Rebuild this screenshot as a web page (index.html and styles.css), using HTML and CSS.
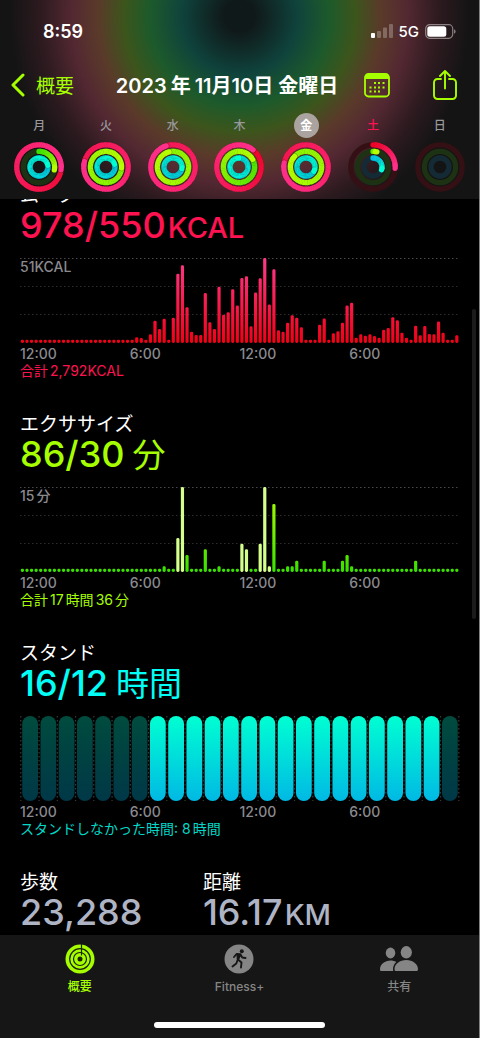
FILE: index.html
```
<!DOCTYPE html>
<html lang="ja">
<head>
  <meta charset="UTF-8">
  <meta name="viewport" content="width=device-width, initial-scale=1.0">
  <title>フィットネス</title>
  <link rel="stylesheet" href="styles.css">
</head>
<body>

<header class="top">
  <div class="status">
    <span class="time">8:59</span>
    <div class="status-icons">
      <svg width="22" height="14" viewBox="0 0 22 14" fill="#fff">
        <rect x="0" y="9" width="4" height="5" rx="1"/>
        <g opacity=".25">
          <rect x="6" y="7" width="4" height="7" rx="1"/>
          <rect x="12" y="3.500" width="4" height="10.500" rx="1"/>
          <rect x="18" y="0" width="4" height="14" rx="1"/>
        </g>
      </svg>
      <span class="network">5G</span>
      <svg width="31" height="15" viewBox="0 0 31 15">
        <rect x=".7" y=".7" width="27" height="13.600" rx="4" fill="none" stroke="#fff" stroke-opacity=".45" stroke-width="1.200"/>
        <rect x="2.300" y="2.300" width="19" height="10.400" rx="2.500" fill="#fff"/>
        <path d="M29 5.300c1 .5 1.600 1.200 1.600 2.200s-.6 1.700-1.600 2.200z" fill="#fff" opacity=".45"/>
      </svg>
    </div>
  </div>

  <div class="titlebar">
    <button class="back">
      <svg width="14" height="24" viewBox="0 0 14 24" fill="none" stroke="currentColor" stroke-width="3" stroke-linecap="round" stroke-linejoin="round"><path d="M12 2 2 12l10 10"/></svg>
      <span>概要</span>
    </button>
    <h1>2023<span class="kanji">年</span>11月10日 金曜日</h1>
    <button class="icon-button" aria-label="カレンダー">
      <svg width="26" height="25" viewBox="0 0 26 25">
        <rect x="1" y="1" width="24" height="22.500" rx="3.500" fill="none" stroke="currentColor" stroke-width="1.800"/>
        <path d="M1 6V4a3 3 0 0 1 3-3h18a3 3 0 0 1 3 3v2z" fill="currentColor"/>
        <g fill="currentColor">
          <path d="M10 9h2v2h-2zM14 9h2v2h-2zM18.500 9h2v2h-2z"/>
          <path d="M5.500 13.500h2v2h-2zM10 13.500h2v2h-2zM14 13.500h2v2h-2zM18.500 13.500h2v2h-2z"/>
          <path d="M5.500 17.500h2v2h-2zM10 17.500h2v2h-2zM14 17.500h2v2h-2z"/>
        </g>
      </svg>
    </button>
    <button class="icon-button share" aria-label="共有">
      <svg width="24" height="30" viewBox="0 0 24 30" fill="none" stroke="currentColor" stroke-width="1.900" stroke-linecap="round" stroke-linejoin="round">
        <path d="M8 9H4.500A3.500 3.500 0 0 0 1 12.500v13A3.500 3.500 0 0 0 4.500 29h15a3.500 3.500 0 0 0 3.500-3.500v-13A3.500 3.500 0 0 0 19.500 9H16"/>
        <path d="M12 18.500V1.500M7 6l5-5 5 5"/>
      </svg>
    </button>
  </div>

  <div class="week" id="week"></div>
</header>

<main>
  <section class="move">
    <h2>ムーブ</h2>
    <p class="value">978/550<span class="unit">KCAL</span></p>
    <div class="chart">
      <svg id="moveChart" viewBox="0 0 439 85" preserveAspectRatio="none"></svg>
      <span class="max">51KCAL</span>
    </div>
    <div class="hours"><span>12:00</span><span>6:00</span><span>12:00</span><span>6:00</span></div>
    <p class="total">合計<span class="num">2,792KCAL</span></p>
  </section>

  <section class="exercise">
    <h2>エクササイズ</h2>
    <p class="value">86/30<span class="kanji">分</span></p>
    <div class="chart">
      <svg id="exerciseChart" viewBox="0 0 439 85" preserveAspectRatio="none"></svg>
      <span class="max">15<span class="num">分</span></span>
    </div>
    <div class="hours"><span>12:00</span><span>6:00</span><span>12:00</span><span>6:00</span></div>
    <p class="total">合計<span class="num">17</span><span class="num">時間</span><span class="num">36</span><span class="num">分</span></p>
  </section>

  <section class="stand">
    <h2>スタンド</h2>
    <p class="value">16/12<span class="kanji">時間</span></p>
    <div class="chart">
      <svg id="standChart" viewBox="0 0 439 85" preserveAspectRatio="none"></svg>
    </div>
    <div class="hours"><span>12:00</span><span>6:00</span><span>12:00</span><span>6:00</span></div>
    <p class="total">スタンドしなかった時間: 8<span class="num">時間</span></p>
  </section>

  <div class="totals">
    <div>
      <h2>歩数</h2>
      <p class="value">23,288</p>
    </div>
    <div>
      <h2>距離</h2>
      <p class="value">16.17<span class="unit">KM</span></p>
    </div>
  </div>

  <div class="scroll-thumb"></div>
</main>

<footer>
  <nav>
    <a href="#" class="active">
      <svg width="30" height="30" viewBox="0 0 30 30" fill="none">
        <circle cx="15" cy="15" r="14.500" fill="currentColor"/>
        <g stroke="#1c2404" stroke-width="1.200">
          <circle cx="15" cy="15" r="10.300"/>
          <circle cx="15" cy="15" r="6.500"/>
          <path d="M16.500 0v11.500"/>
        </g>
        <circle cx="15" cy="15" r="2.500" fill="#1c2404"/>
      </svg>
      概要
    </a>
    <a href="#">
      <svg width="30" height="30" viewBox="0 0 30 30">
        <circle cx="15" cy="15" r="14.500" fill="currentColor"/>
        <circle cx="17.800" cy="7.300" r="2" fill="#161616"/>
        <path d="M10 13l2.500-3 4 .3-2.500 5.200 3.500 3-.5 5M13.800 15.500l-1.500 4-3.800 3M16.500 10.500l1.800 3 3.200.5" fill="none" stroke="#161616" stroke-width="1.900" stroke-linecap="round" stroke-linejoin="round"/>
        <path d="M12.500 10.500l4-.3-1.800 6-2-1z" fill="#161616"/>
      </svg>
      Fitness+
    </a>
    <a href="#">
      <svg width="38" height="30" viewBox="0 0 38 30" fill="currentColor">
        <ellipse cx="10.500" cy="9" rx="4.800" ry="5.400"/>
        <path d="M0 25.500C0 20 5 16.500 10.500 16.500c2.200 0 4.200.5 5.800 1.500-2.300 2-3.300 4.500-3.300 7.500 0 .6.100 1 .4 1.500H1.500C.5 27 0 26.500 0 25.500z"/>
        <ellipse cx="26.300" cy="8.300" rx="5.600" ry="6.200"/>
        <path d="M14.500 25.200c0-5.200 5.300-9.200 11.800-9.200S38 20 38 25.200c0 1.200-.6 1.800-1.700 1.800H16.200c-1.100 0-1.700-.6-1.700-1.800z"/>
      </svg>
      共有
    </a>
  </nav>
  <div class="home-bar"></div>
</footer>

<script src="script.js"></script>
</body>
</html>
```

FILE: styles.css
```
:root {
  --bar-bg: #141414;
  --move: #ff1250;
  --exercise: #a6ff00;
  --stand: #00fff6;
  --grey: #8a8a8f;
  --tint: #a6ff00;
}
* {
  box-sizing: border-box;
}
body {
  margin: 0;
  height: 100vh;
  display: flex;
  flex-direction: column;
  background: #000;
  color: #fff;
  border-right: 1px solid #808080;
  font-family: Inter, "Noto Sans CJK JP", sans-serif;
}
h1, h2, p {
  margin: 0;
}
button {
  padding: 0;
  border: none;
  background: none;
  color: var(--tint);
  font: inherit;
  cursor: pointer;
}
svg {
  display: block;
}

/* header */
.top {
  position: relative;
  z-index: 1;
  flex: none;
  height: 199px;
  background: radial-gradient(circle at 50% 16px, #10191a 16px, #0f433c 58px, #1d5a2b 90px, #3c551c 116px, #5a3a2a 142px, #532832 168px, #2c1a1f 200px, var(--bar-bg) 230px);
}
.status {
  display: flex;
  justify-content: space-between;
  align-items: center;
  height: 62px;
  padding: 0 23px 0 43px;
}
.time {
  font-size: 18px;
  font-weight: 600;
}
.status-icons {
  display: flex;
  align-items: center;
  gap: 6px;
}
.network {
  font-size: 15px;
  font-weight: 500;
}
.titlebar {
  display: flex;
  align-items: center;
  height: 46px;
  padding: 0 22px 0 11px;
}
.back {
  display: flex;
  align-items: center;
  gap: 11px;
  font-size: 19px;
}
.back span, h1 {
  padding-bottom: 2px;
}
h1 {
  flex: 1;
  margin-left: 16px;
  text-align: center;
  white-space: nowrap;
  font-size: 20px;
  font-weight: 600;
}
h1 .kanji {
  margin: 0 4px;
}
.share {
  margin-left: 43px;
}
.week {
  display: grid;
  grid-template-columns: repeat(7, 1fr);
  padding: 5px 6px 0;
}
.day {
  display: flex;
  flex-direction: column;
  align-items: center;
  gap: 4px;
  color: #98989d;
  font-size: 12px;
  font-weight: 500;
}
.day span {
  width: 25px;
  height: 25px;
  line-height: 25px;
  border-radius: 50%;
  text-align: center;
}
.day.selected span {
  background: #aaa39f;
  color: #fff;
  font-weight: 700;
}
.day.today span {
  color: var(--move);
}

/* charts */
main {
  position: relative;
  flex: 1;
  min-height: 0;
  overflow: hidden;
  padding: 0 20px;
}
section {
  padding-bottom: 34px;
}
/* first title is half scrolled under the header */
.move {
  margin-top: -16px;
}
h2 {
  height: 24px;
  font-size: 19px;
  line-height: 26px;
  font-weight: 400;
}
.value {
  height: 38px;
  font-size: 36px;
  line-height: 36px;
  font-weight: 500;
  white-space: nowrap;
}
.value .unit {
  margin-left: 2px;
  font-size: 29px;
  line-height: 1;
}
.value .kanji {
  margin-left: 8px;
  font-size: 33px;
  line-height: 1;
  font-weight: 400;
}
.move .value, .move .total {
  color: var(--move);
}
.exercise .value, .exercise .total {
  color: var(--exercise);
}
.stand .value {
  color: var(--stand);
}
.stand .total {
  color: #00d8c8;
}
.chart {
  position: relative;
  height: 85px;
  margin-top: 13px;
}
.chart svg {
  width: 100%;
  height: 85px;
  overflow: visible;
}
.max {
  position: absolute;
  top: 0;
  left: 0;
  line-height: 18px;
  font-size: 14px;
  font-weight: 500;
  color: var(--grey);
}
.hours {
  display: grid;
  grid-template-columns: repeat(4, 1fr);
  height: 18px;
  margin-top: 2px;
  line-height: 18px;
  font-size: 14px;
  font-weight: 500;
  color: var(--grey);
}
.total {
  height: 15px;
  line-height: 15px;
  font-size: 14px;
}
.num {
  margin-left: 2px;
}
.totals {
  display: grid;
  grid-template-columns: 5fr 7fr;
}
.totals .value {
  color: #aeb4c4;
}
.scroll-thumb {
  position: absolute;
  top: 15%;
  right: 3px;
  width: 4px;
  height: 42%;
  border-radius: 2px;
  background: #1b1b1b;
}

/* tab bar */
footer {
  flex: none;
  background: #161616;
  padding: 9px 0 10px;
}
nav {
  display: grid;
  grid-template-columns: repeat(3, 1fr);
}
nav a {
  display: flex;
  flex-direction: column;
  align-items: center;
  gap: 4px;
  color: #858585;
  font-size: 12px;
  line-height: 18px;
  font-weight: 500;
  text-decoration: none;
}
nav a.active {
  color: var(--tint);
}
.home-bar {
  width: 171px;
  height: 6px;
  margin: 26px auto 0;
  border-radius: 3px;
  background: #fff;
}
```

FILE: script.js
```
const days = [
  { name: '月', move: 1.27, exercise: 0.28, stand: 1.22 },
  { name: '火', move: 1.79, exercise: 2.26, stand: 1.2 },
  { name: '水', move: 1.95, exercise: 2.96, stand: 1.28 },
  { name: '木', move: 1.11, exercise: 1.17, stand: 2 },
  { name: '金', move: 1.78, exercise: 2.87, stand: 1.33, state: 'selected' },
  { name: '土', move: 0.26, exercise: 0.04, stand: 0.3, state: 'today' },
  { name: '日', move: 0, exercise: 0, stand: 0 }
];

const rings = [
  { key: 'move', r: 22.2, from: [235, 0, 30], to: [255, 48, 140], track: '#341015' },
  { key: 'exercise', r: 15.6, from: [50, 222, 0], to: [184, 255, 0], track: '#1d3113' },
  { key: 'stand', r: 9, from: [0, 186, 228], to: [0, 255, 212], track: '#142b35' }
];

// 15分ごとの消費カロリー
const moveData = [
  ...Array(25).fill(0), 3.4, 3, 0, 5.2, 13.3, 8.4, 14.5, 0, 15.1, 41.6, 46.6, 21.5,
  6.8, 4.8, 4.8, 30, 12.4, 8.4, 33.7, 17, 18.5, 32.3, 22.5, 39, 40, 10, 30.3, 38.8,
  51, 23.1, 44.2, 7.6, 6.8, 12.2, 16.7, 15.1, 9.4, 0, 0, 0, 11, 14.7, 0, 5.8, 7,
  12.2, 22.5, 24.1, 3.2, 5.2, 4.4, 5.2, 4.2, 3.2, 8, 9, 15.5, 13.7, 6.2, 3.2, 0,
  10.4, 4.6, 10.2, 5.4, 5.2, 12.9, 6.2, 0, 0, 4.6
];

// 15分ごとのエクササイズ（分）、workout はワークアウト中の枠
const exerciseData = Array(96).fill(0);
Object.assign(exerciseData, {
  31: 1, 34: 6, 35: 15, 36: 3, 40: 4, 43: 1, 48: 5, 49: 4, 52: 5, 53: 15, 54: 1,
  55: 12, 58: 1, 59: 1, 60: 2, 66: 2, 70: 2, 71: 3, 72: 1, 86: 2
});
const workout = [34, 35, 48, 49, 52, 53, 54];

function point(r, turn) {
  const a = turn * 2 * Math.PI;
  return (25 + r * Math.sin(a)).toFixed(2) + ' ' + (25 - r * Math.cos(a)).toFixed(2);
}

// 色が少しずつ変わるように短い弧をつなげて描く
function drawRing(ring, value) {
  let out = `<circle cx="25" cy="25" r="${ring.r}" stroke="${ring.track}"/>`;
  if (value === 0) return out;
  const start = Math.max(0, value - 1);
  const steps = Math.ceil((value - start) * 60);
  for (let i = 0; i < steps; i++) {
    const a = start + (value - start) * i / steps;
    const b = start + (value - start) * (i + 1) / steps;
    const color = ring.from.map((c, n) => Math.round(c + (ring.to[n] - c) * b / value));
    if (i === steps - 1 && value > 1) {
      out += `<path d="M${point(ring.r, b)}L${point(ring.r, b + 0.002)}" stroke="rgba(0,0,0,.3)" stroke-width="6" stroke-linecap="round"/>`;
    }
    const cap = i === steps - 1 || (i === 0 && value < 1) ? 'round' : 'butt';
    out += `<path d="M${point(ring.r, a - (i ? 0.004 : 0))}A${ring.r} ${ring.r} 0 0 1 ${point(ring.r, b)}" stroke="rgb(${color})" stroke-linecap="${cap}"/>`;
  }
  return out;
}

document.getElementById('week').innerHTML = days.map(day => `
  <div class="day ${day.state || ''}">
    <span>${day.name}</span>
    <svg width="50" height="50" viewBox="0 0 50 50" fill="none" stroke-width="5.3">
      ${rings.map(ring => drawRing(ring, day[ring.key])).join('')}
    </svg>
  </div>`).join('');

function gradient(id, top, bottom) {
  return `<linearGradient id="${id}" gradientUnits="userSpaceOnUse" x1="0" y1="0" x2="0" y2="85">
    <stop offset="0" stop-color="${top}"/><stop offset="1" stop-color="${bottom}"/></linearGradient>`;
}

function drawBars(id, data, max, top, bottom, light) {
  const step = 439 / data.length;
  let out = gradient(id + 'Fill', top, bottom);
  [0.5, 28.5, 56.5].forEach((y, i) => {
    out += `<path d="M0 ${y}H439" stroke="${i ? '#2c2c2e' : '#48484a'}" stroke-width="1" stroke-dasharray="1.5 2.5"/>`;
  });
  data.forEach((value, i) => {
    const h = Math.max(3.3, value / max * 85);
    const fill = light && light.includes(i) ? '#d4ff8c' : `url(#${id}Fill)`;
    out += `<rect x="${(i * step + 0.8).toFixed(2)}" y="${(85 - h).toFixed(2)}" width="3.2" height="${h.toFixed(2)}" rx="1.4" fill="${fill}"/>`;
  });
  document.getElementById(id).innerHTML = out;
}

function drawStand() {
  const step = 438 / 24;
  let out = gradient('standOn', '#00ffd2', '#00b9e4') + gradient('standOff', '#004b3e', '#003847');
  for (let i = 0; i <= 24; i++) {
    const x = (i * step + 0.8).toFixed(2);
    out += `<path d="M${x} 0V85" stroke="#3a3a3c" stroke-width="1.2" stroke-dasharray="1.5 2.5"/>`;
  }
  for (let i = 0; i < 24; i++) {
    const on = i >= 7 && i < 23;
    out += `<rect x="${(i * step + 2.2).toFixed(2)}" y="0" width="15.8" height="85" rx="7.9" fill="url(#${on ? 'standOn' : 'standOff'})"/>`;
  }
  document.getElementById('standChart').innerHTML = out;
}

drawBars('moveChart', moveData, 51, '#ff3a8c', '#f00014');
drawBars('exerciseChart', exerciseData, 15, '#b4ff00', '#38e000', workout);
drawStand();
```
